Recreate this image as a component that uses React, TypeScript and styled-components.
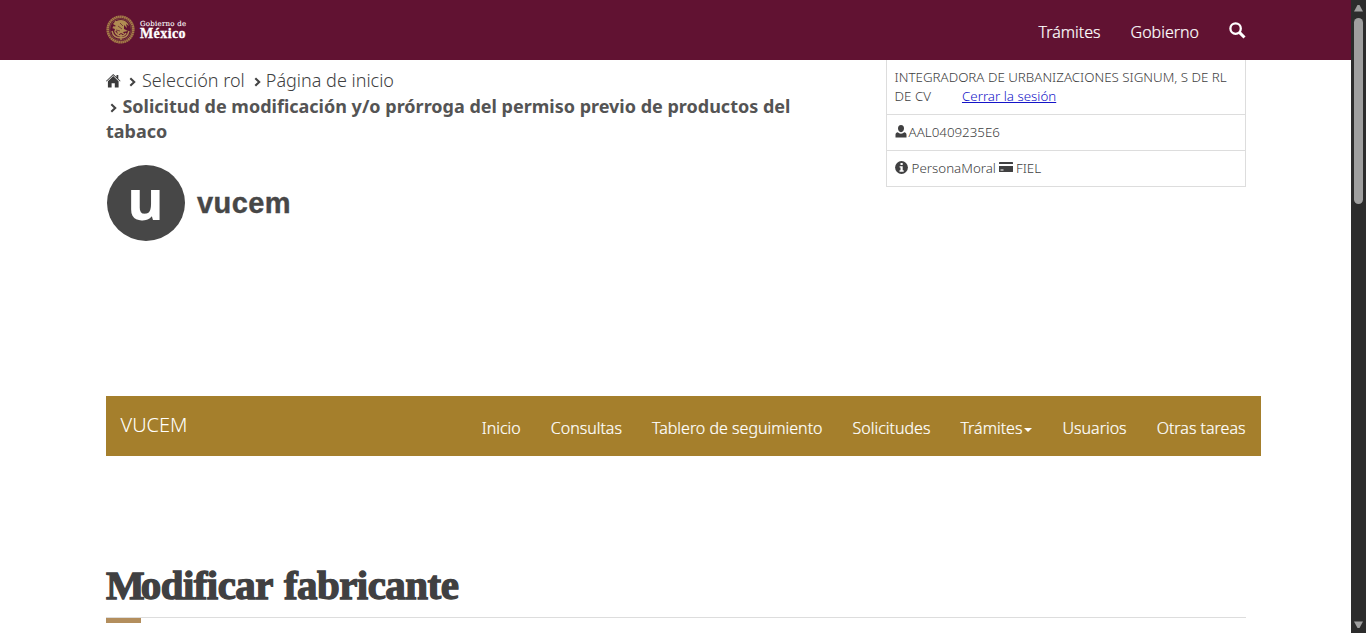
import React from "react";
import styled, { createGlobalStyle } from "styled-components";

const GlobalStyle = createGlobalStyle`
  * { box-sizing: border-box; }
  html, body { margin: 0; height: 100%; overflow: hidden; background: #fff; }
  body { font-family: "Noto Sans", sans-serif; font-weight: 300; color: #404041; font-size: 18px; }
  a { color: inherit; text-decoration: none; }
`;

const Window = styled.div`
  display: flex;
  height: 633px;
  width: 1366px;
  overflow: hidden;
`;
const Page = styled.div`
  width: 1351px;
  flex: none;
`;
const TopBar = styled.header`
  height: 60px;
  padding: 0 105px 0 106px;
  background: #611232;
  color: #fff;
  display: flex;
  justify-content: space-between;
`;
const Brand = styled.a`
  display: flex;
  padding-top: 15px;
  gap: 5px;
`;
const BrandText = styled.span`
  display: flex;
  flex-direction: column;
  padding-top: 5px;
`;
const BrandSmall = styled.span`
  font: 400 7px/8px "DejaVu Serif", serif;
  letter-spacing: 0.25px;
  white-space: nowrap;
  -webkit-text-stroke: 0.1px #fff;
`;
const BrandLarge = styled.span`
  font: 700 14px/12px "Liberation Serif", serif;
  letter-spacing: 0.4px;
  -webkit-text-stroke: 0.3px #fff;
`;
const TopLinks = styled.nav`
  display: flex;
  gap: 30px;
  padding-top: 21px;
  font-size: 16px;
  line-height: 23px;
  -webkit-text-stroke: 0.2px #fff;
`;
const Label = styled.a`
  white-space: nowrap;
`;
const SearchButton = styled.a`
  padding-top: 1px;
  svg { display: block; }
`;
const Container = styled.main`
  margin: 0 105px 0 106px;
`;
const Intro = styled.section`
  display: flex;
  justify-content: space-between;
  height: 336px;
`;
const IntroMain = styled.div`
  width: 720px;
`;
const Crumbs = styled.div`
  padding-top: 8px;
  line-height: 25px;
`;
const CrumbRow = styled.div<{ $h?: number }>`
  display: flex;
  align-items: flex-start;
  height: ${(p) => p.$h ?? 25}px;
`;
const CrumbIcon = styled.span<{ $t?: number; $l?: number; $r?: number }>`
  display: flex;
  margin: ${(p) => p.$t ?? 9}px ${(p) => p.$r ?? 0}px 0 ${(p) => p.$l ?? 0}px;
`;
const Current = styled.strong`
  font-weight: 700;
  color: #545454;
  white-space: nowrap;
`;
const Logo = styled.div`
  display: flex;
  align-items: center;
  margin: 21px 0 0 1px;
  gap: 12px;
`;
const LogoDisc = styled.div`
  width: 78px;
  height: 76px;
  border-radius: 50%;
  background: #474747;
  color: #fff;
  text-align: center;
  font: 700 56px/67px "Noto Sans", sans-serif;
  padding-right: 1px;
`;
const LogoWord = styled.span`
  font: 700 29px/36px "Liberation Sans", sans-serif;
  letter-spacing: 0.4px;
  color: #474747;
  -webkit-text-stroke: 0.4px #474747;
`;
const Account = styled.aside`
  width: 360px;
  height: 127px;
  border: 1px solid #ddd;
  border-top: 0;
  font-size: 13.33px;
  line-height: 19px;
`;
const AccountRow = styled.div<{ $h: number }>`
  height: ${(p) => p.$h}px;
  padding: 8px 7px 0 7.6px;
  display: flex;
  flex-wrap: wrap;
  align-content: flex-start;
  & + & { border-top: 1px solid #ddd; }
`;
const RowIcon = styled.span<{ $t?: number; $l?: number; $r: number }>`
  display: flex;
  align-items: flex-start;
  padding-top: ${(p) => p.$t ?? 2}px;
  margin: 0 ${(p) => p.$r}px 0 ${(p) => p.$l ?? 0}px;
`;
const Logout = styled.a`
  && { color: #1414c8; text-decoration: underline; }
  margin-left: 31px;
`;
const MainNav = styled.nav`
  width: 1155px;
  height: 60px;
  background: #a57f2c;
  color: #fff;
  display: flex;
  justify-content: space-between;
  padding: 0 15.5px 0 14.5px;
`;
const NavBrand = styled.a`
  font-size: 20px;
  line-height: 58px;
`;
const NavItems = styled.div`
  display: flex;
  gap: 30px;
  font-size: 16px;
  line-height: 64px;
  -webkit-text-stroke: 0.2px #fff;
`;
const Caret = styled.span`
  display: inline-block;
  margin-left: 2px;
  vertical-align: middle;
  border: 4px solid transparent;
  border-top-color: #fff;
  border-bottom: 0;
`;
const Heading = styled.h1`
  margin: 106px 0 0;
  height: 56px;
  border-bottom: 1px solid #ddd;
  font: 700 41px/47px "Liberation Serif", serif;
  color: #404041;
  letter-spacing: -0.55px;
  word-spacing: 2px;
  -webkit-text-stroke: 1.3px #404041;
  white-space: nowrap;
  &::first-letter { letter-spacing: -4px; }
`;
const Accent = styled.div`
  width: 35px;
  height: 5px;
  background: #b38e5d;
`;
const Scrollbar = styled.div`
  width: 15px;
  height: 633px;
  background: #2c2c2c;
  display: flex;
  flex-direction: column;
  align-items: center;
  padding: 4px 0;
  svg { display: block; }
`;
const Thumb = styled.div`
  width: 9px;
  height: 186px;
  margin: 6px 0 auto;
  border-radius: 5px;
  background: #9f9f9f;
`;

const Seal = () => (
  <svg width="29" height="29" viewBox="0 0 29 29" fill="none">
    <circle cx="14.5" cy="14.5" r="12.8" stroke="#a57d48" strokeWidth="2.6" strokeDasharray="1.7 .35" />
    <circle cx="14.5" cy="14.5" r="10.8" stroke="#7f5040" strokeWidth=".8" />
    <path d="M7 9c2-3 5-4 8-4 4 0 7 3 8 6l-3-2 1 4-3-3v4l4 2-5 1 2 3-4-2-3 2-1-4-3 1 1-3-3-1 4-2z" fill="#b08c52" />
    <path d="M9 6l4 3m-6 3l5 1m-6 3c1 5 5 7 9 7s7-3 8-7M9 17c2 3 4 4 6 4s4-1 5-3M15 19v6" stroke="#b18d55" strokeWidth="1.4" />
    <path d="M14 8l3 3m-5 0l4 3m-6 1l4 1" stroke="#6a2a35" strokeWidth=".8" />
  </svg>
);
const Chevron = () => (
  <svg width="8" height="10" viewBox="0 0 8 10">
    <path d="M1.3 1.3L5.2 5 1.3 8.7" fill="none" stroke="#444" strokeWidth="2.1" />
  </svg>
);
const Home = () => (
  <svg width="15" height="14" viewBox="0 0 15 14" fill="#3a3a3b">
    <path d="M7.200 0L10.500 3V1h1.800v3.700L14.600 7l-.6.6L7.200 1.300.6 7.600 0 7z" />
    <path d="M7.200 2L12.600 7.200V13.500H8.800V9.200H5.600V13.500H1.900V7.200z" />
  </svg>
);
const Search = () => (
  <svg width="17" height="17" viewBox="0 0 17 17" fill="none" stroke="#fff">
    <circle cx="6.6" cy="6.6" r="5.2" strokeWidth="2.3" />
    <path d="M10.4 10.4l5.1 5.1" strokeWidth="3" />
  </svg>
);
const User = () => (
  <svg width="12" height="13" viewBox="0 0 12 13" fill="#404041">
    <path d="M6 0c2 0 3 1.300 3 3.300C9 5.500 7.800 7.200 6 7.200S3 5.500 3 3.300C3 1.300 4 0 6 0z" />
    <path d="M2.800 7.300C3.600 8.200 4.700 8.700 6 8.700s2.400-.5 3.200-1.400c1.300.3 2.300 1 2.300 2.400V12.500H.5V9.700c0-1.400 1-2.100 2.300-2.400z" />
  </svg>
);
const Info = () => (
  <svg width="13" height="13" viewBox="0 0 13 13">
    <circle cx="6.500" cy="6.500" r="6.400" fill="#404041" />
    <path d="M5.500 2h2.200v2H5.500zM4.600 5.200h3.100v4.100h1v1.400H4.500V9.300h1V6.600h-.9z" fill="#fff" />
  </svg>
);
const Card = () => (
  <svg width="14" height="12" viewBox="0 0 14 12">
    <path d="M.6 0h12.800q.6 0 .6.600V2H0V.6Q0 0 .6 0zM0 4h14v5.400q0 .6-.6.600H.6q-.6 0-.6-.6z" fill="#404041" />
    <path d="M1.500 7.500h3v1h-3z" fill="#fff" />
  </svg>
);
const Arrow = ({ down }: { down?: boolean }) => (
  <svg width="9" height="8" viewBox="0 0 9 8" fill="#9f9f9f">
    <path d={down ? "M0 .5h9L5.500 7h-2z" : "M0 7.500h9L5.500 1h-2z"} />
  </svg>
);

export default function App() {
  return (
    <Window>
      <GlobalStyle />
      <Page>
        <TopBar>
          <Brand>
            <Seal />
            <BrandText>
              <BrandSmall>Gobierno de</BrandSmall>
              <BrandLarge>México</BrandLarge>
            </BrandText>
          </Brand>
          <TopLinks>
            <Label>Trámites</Label>
            <Label>Gobierno</Label>
            <SearchButton><Search /></SearchButton>
          </TopLinks>
        </TopBar>
        <Container>
          <Intro>
            <IntroMain>
              <Crumbs>
                <CrumbRow $h={26}>
                  <CrumbIcon $t={6} $r={8}><Home /></CrumbIcon>
                  <CrumbIcon $r={5}><Chevron /></CrumbIcon>
                  <Label>Selección rol</Label>
                  <CrumbIcon $l={9} $r={4}><Chevron /></CrumbIcon>
                  <Label>Página de inicio</Label>
                </CrumbRow>
                <CrumbRow>
                  <CrumbIcon $l={4} $r={4.4}><Chevron /></CrumbIcon>
                  <Current>Solicitud de modificación y/o prórroga del permiso previo de productos del</Current>
                </CrumbRow>
                <CrumbRow><Current>tabaco</Current></CrumbRow>
              </Crumbs>
              <Logo>
                <LogoDisc>u</LogoDisc>
                <LogoWord>vucem</LogoWord>
              </Logo>
            </IntroMain>
            <Account>
              <AccountRow $h={54}>
                <Label>INTEGRADORA DE URBANIZACIONES SIGNUM, S DE RL</Label>
                <Label>DE CV</Label>
                <Logout>Cerrar la sesión</Logout>
              </AccountRow>
              <AccountRow $h={36}>
                <RowIcon $r={2}><User /></RowIcon>
                <Label>AAL0409235E6</Label>
              </AccountRow>
              <AccountRow $h={36}>
                <RowIcon $r={4}><Info /></RowIcon>
                <Label>PersonaMoral</Label>
                <RowIcon $t={3} $l={3} $r={3}><Card /></RowIcon>
                <Label>FIEL</Label>
              </AccountRow>
            </Account>
          </Intro>
          <MainNav>
            <NavBrand>VUCEM</NavBrand>
            <NavItems>
              <Label>Inicio</Label>
              <Label>Consultas</Label>
              <Label>Tablero de seguimiento</Label>
              <Label>Solicitudes</Label>
              <Label>Trámites<Caret /></Label>
              <Label>Usuarios</Label>
              <Label>Otras tareas</Label>
            </NavItems>
          </MainNav>
          <Heading>Modificar fabricante</Heading>
          <Accent />
        </Container>
      </Page>
      <Scrollbar>
        <Arrow />
        <Thumb />
        <Arrow down />
      </Scrollbar>
    </Window>
  );
}
